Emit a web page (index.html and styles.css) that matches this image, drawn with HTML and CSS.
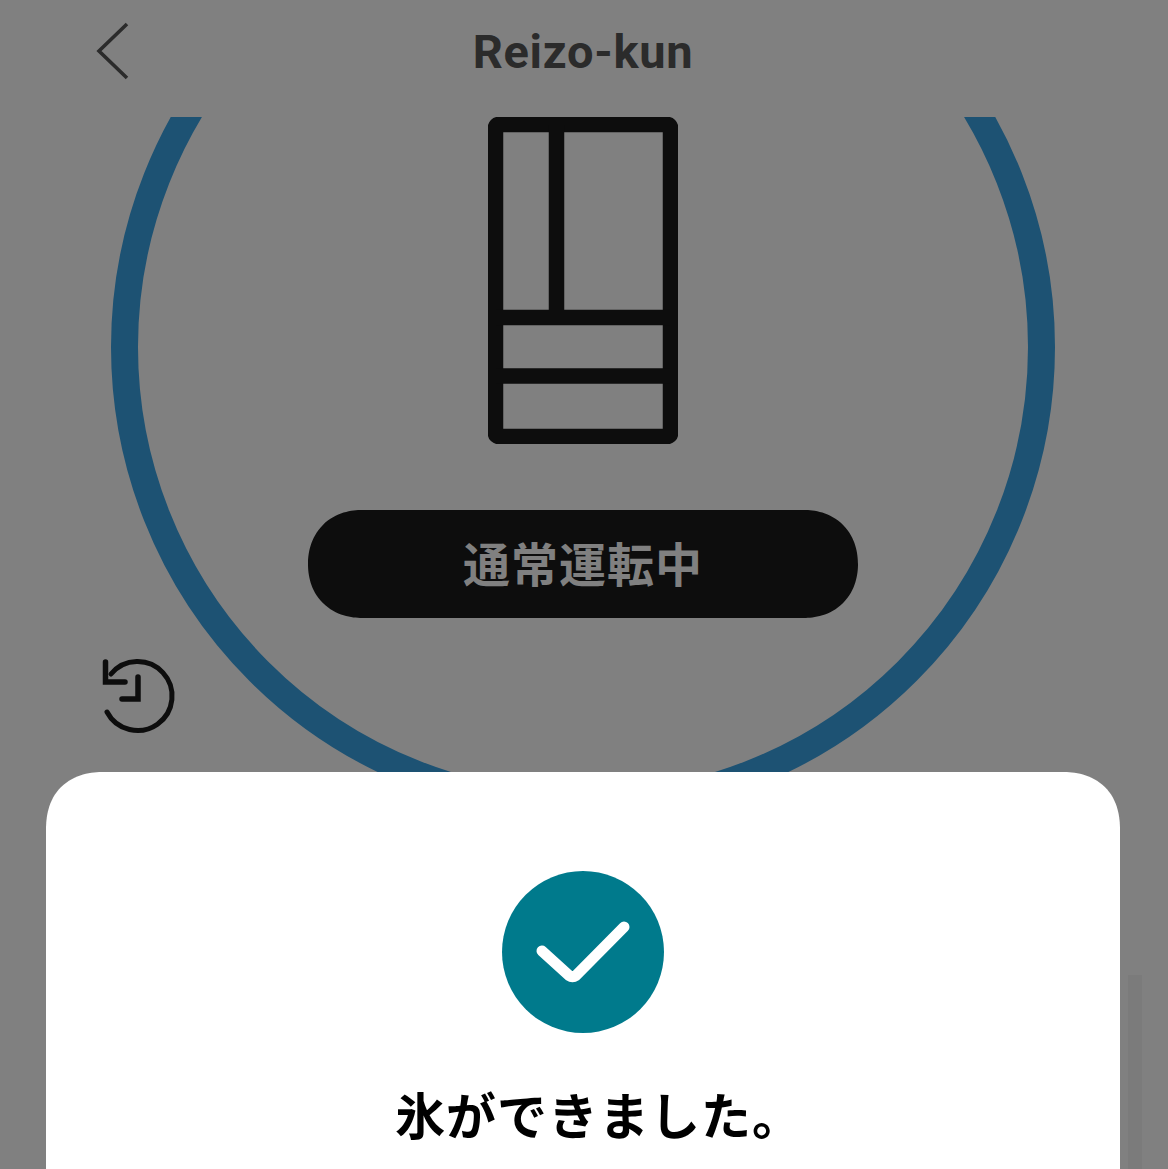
FILE: index.html
```html
<!DOCTYPE html>
<html lang="ja">
  <head>
    <meta charset="UTF-8" />
    <meta name="viewport" content="width=device-width, initial-scale=1.0" />
    <title>Reizo-kun</title>
    <link rel="stylesheet" href="styles.css">
  </head>
  <body>
    <div class="app">
      <header class="top-bar">
        <a class="back-btn" href="#" aria-label="back">
          <svg width="40" height="64" viewBox="0 0 40 64">
            <path d="M35 8 L7 35 L35 62" fill="none" stroke="#2b2b2b" stroke-width="3.6" />
          </svg>
        </a>
        <h1>Reizo-kun</h1>
      </header>

      <main class="device">
        <div class="ring"></div>

        <svg class="fridge" width="190" height="327" viewBox="0 0 190 327">
          <rect x="7.500" y="7.500" width="175" height="312" rx="3" fill="none" stroke="#0d0d0d" stroke-width="15.500" />
          <path d="M68.500 8 V200 M8 200.500 H182 M8 259 H182" fill="none" stroke="#0d0d0d" stroke-width="15.500" />
        </svg>

        <div class="status-pill">通常運転中</div>

        <a class="history-btn" href="#" aria-label="history">
          <svg width="80" height="84" viewBox="0 0 80 84">
            <path d="M11 18 A34.500 34.500 0 1 1 7 56" fill="none" stroke="#0d0d0d" stroke-width="5" stroke-linecap="round" />
            <path d="M5.500 6 V26 H25" fill="none" stroke="#0d0d0d" stroke-width="5.500" stroke-linecap="round" />
            <path d="M38 21 V43 H22" fill="none" stroke="#0d0d0d" stroke-width="5.500" stroke-linecap="round" />
          </svg>
        </a>
      </main>

      <section class="sheet">
        <svg class="done-icon" width="162" height="162" viewBox="0 0 162 162">
          <circle cx="81" cy="81" r="81" fill="#007a8c" />
          <path d="M40 80 L67 104.500 Q70.500 107 74 104.500 L122 56" fill="none" stroke="#fff" stroke-width="11" stroke-linecap="round" stroke-linejoin="round" />
        </svg>
        <p class="sheet-msg">氷ができました。</p>
      </section>
    </div>

    <div class="scroll-hint"></div>
  </body>
</html>
```
FILE: styles.css
```css
html,
body {
  height: 100%;
}

body {
  margin: 0;
  height: 1169px;
  overflow: hidden;
  background-color: #808080;
  font-family: Roboto, "Noto Sans CJK JP", sans-serif;
  position: relative;
}

.app {
  width: 1166px;
  height: 1169px;
  display: flex;
  flex-direction: column;
  overflow: hidden;
}

.top-bar {
  height: 117px;
  flex: none;
  display: flex;
  justify-content: center;
  align-items: center;
  position: relative;
}

.top-bar h1 {
  margin: 0 0 14px;
  font-size: 47px;
  font-weight: 700;
  letter-spacing: 0.700px;
  color: #2b2b2b;
}

.back-btn {
  position: absolute;
  left: 92px;
  top: 16px;
  display: block;
}

.back-btn svg {
  display: block;
}

.device {
  height: 655px;
  flex: none;
  position: relative;
  overflow: hidden;
  display: flex;
  flex-direction: column;
  align-items: center;
}

.ring {
  position: absolute;
  left: 111px;
  top: -242px;
  width: 944px;
  height: 944px;
  box-sizing: border-box;
  border: 27px solid #1d5273;
  border-radius: 50%;
}

.fridge {
  position: relative;
  display: block;
  flex: none;
}

.status-pill {
  position: relative;
  margin-top: 66px;
  width: 550px;
  height: 108px;
  box-sizing: border-box;
  padding-bottom: 6px;
  border-radius: 54px;
  corner-shape: superellipse(1.1);
  background-color: #0d0d0d;
  color: #808080;
  font-family: "Noto Sans CJK JP", sans-serif;
  font-size: 47px;
  font-weight: 700;
  letter-spacing: 1px;
  display: flex;
  justify-content: center;
  align-items: center;
}

.history-btn {
  position: absolute;
  left: 100px;
  top: 539px;
  display: block;
}

.history-btn svg {
  display: block;
}

.sheet {
  margin: 0 46px;
  flex: 1;
  background-color: #fff;
  border-radius: 58px 58px 0 0;
  corner-shape: superellipse(1.2);
  display: flex;
  flex-direction: column;
  align-items: center;
  padding-top: 99px;
}

.done-icon {
  display: block;
  flex: none;
}

.sheet-msg {
  margin: 46px 0 0 32px;
  font-family: "Noto Sans CJK JP", sans-serif;
  font-size: 50px;
  font-weight: 700;
  letter-spacing: 1px;
  line-height: 68px;
  color: #000;
}

.scroll-hint {
  position: absolute;
  left: 1128px;
  top: 975px;
  width: 14px;
  height: 194px;
  background-color: #7b7b7b;
}
```
